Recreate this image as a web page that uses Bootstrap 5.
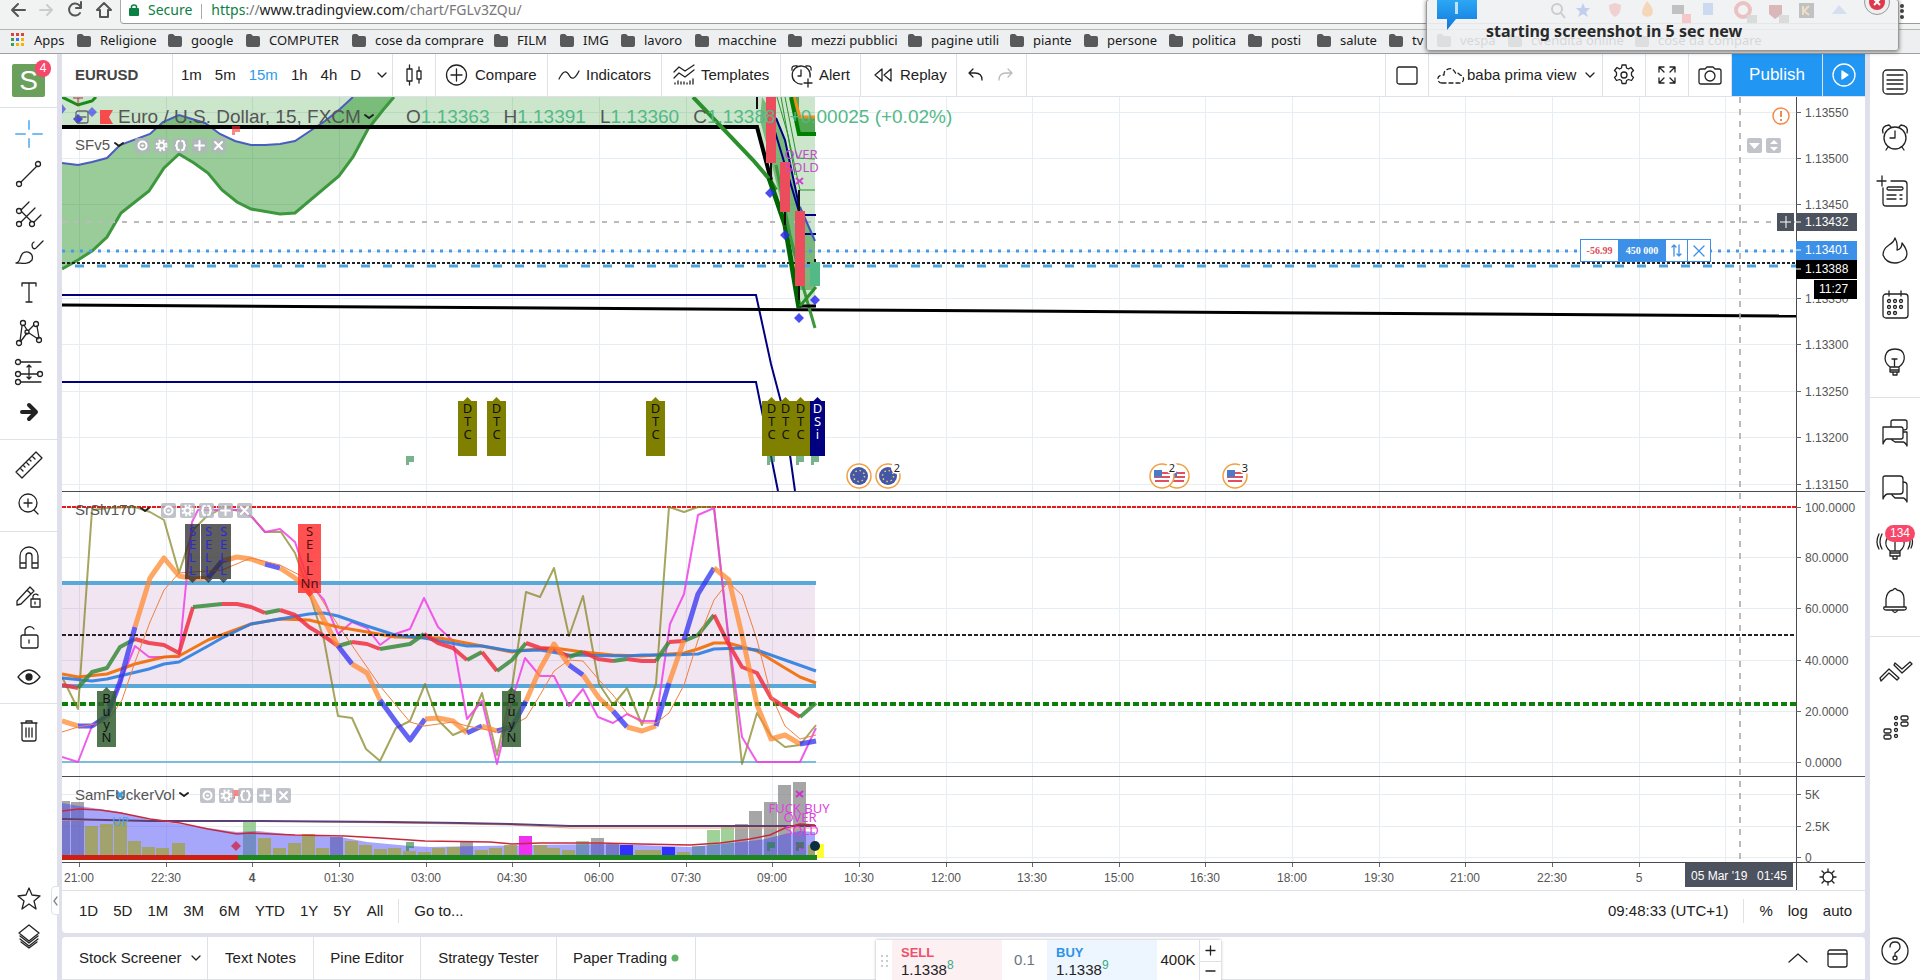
<!DOCTYPE html>
<html lang="en">
<head>
<meta charset="utf-8">
<title>EURUSD chart</title>
<meta name="viewport" content="width=device-width, initial-scale=1">
<link href="https://cdn.jsdelivr.net/npm/bootstrap@5.3.0/dist/css/bootstrap.min.css" rel="stylesheet">
<style>
:root{--gap:#e0e0ec;--line:#dfe1e8;--ink:#222}
body{font-family:"Liberation Sans",Arial,sans-serif;font-size:15px;line-height:20px;color:var(--ink);background:var(--gap)}
button,a.tool{background:none;border:0;padding:0;color:inherit;text-decoration:none}
svg{display:block;overflow:hidden}
.ico{fill:none;stroke:#222;stroke-width:1.3;stroke-linecap:round;stroke-linejoin:round;overflow:visible;flex:none}
.omni{height:29px;background:#f1f2f2}
.nav-icons{width:120px;padding-left:10px;gap:14px;height:20px}
.address{height:24px;margin-bottom:5px;gap:9px;border-left:1px solid #aaa;border-bottom:1px solid #9b9b9b;border-bottom-left-radius:4px;background:#fff;font:14px/19px "Noto Sans","Open Sans",sans-serif}
.address .sec{color:#0b8043}
.address .dim{color:#777}
.marks{height:25px;background:#edeff0;border-bottom:1px solid #a0a0a0;border-top:1px solid #b5b5b5;font:13px/20px "Noto Sans","Open Sans",sans-serif;color:#1a1a1a;padding:0 0 3px 11px}
.marks a{color:inherit;text-decoration:none;white-space:nowrap;flex:none}
.marks svg{margin-right:9px}
.toast-box{left:1426px;right:21px;top:-1px;height:52px;background:rgba(238,240,241,.88);border:1px solid #999;border-radius:3px;box-shadow:0 1px 4px rgba(0,0,0,.5);z-index:5}
.toast-box p{font:bold 16px/22px "Noto Sans","Open Sans",sans-serif;left:59px;top:20px;color:#2a2a2a}
.side-l{width:57px;margin-right:5px}
.side-r{width:50px;margin-left:5px}
.avatar{width:33px;height:33px;background:#6a9f5c;color:#fff;font-size:28px;line-height:33px;border-radius:2px}
.count{background:#f7486b;color:#fff;border-radius:10px;font-size:12px;line-height:17px}
.group{padding:6px 0 5px;border-bottom:1px solid var(--line)}
.side-l .tool{height:40px;width:57px}
.side-r .tool{height:56px;width:50px}
.side-r .group{padding:7px 0}
.side-r .group:first-child{padding-top:0}
.tool{display:flex;align-items:center;justify-content:center;flex:none}
.topbar{height:43px;border-bottom:1px solid var(--line)}
.cell{border-right:1px solid var(--line);display:flex;align-items:center;white-space:nowrap}
.c43{width:43px}
.blue{background:#2196f3;color:#fff}
.blue .ico{stroke:#fff}
.range{height:43px;border-top:1px solid var(--line);border-radius:0 0 4px 4px;margin-bottom:4px}
.vr-line{width:1px;height:24px;background:var(--line)}
.tabs{height:43px;border-bottom:1px solid var(--line);border-radius:4px 4px 0 0}
.tabs .cell{height:100%}
.trade{left:814px;top:3px;height:40px;width:345px;box-shadow:0 0 3px rgba(0,0,0,.3)}
.trade .leg{width:110px;padding:3px 9px 0;line-height:18px;text-align:left}
.trade sup{font-size:12px;color:#3aa981;top:-6px}
.legend{left:13px;color:#555;font-size:15px;line-height:16px;white-space:nowrap}
.legend-main{font-size:19px;line-height:20px}
.lb{width:15px;height:15px;background:rgba(178,180,190,.8);border-radius:2px;display:flex;align-items:center;justify-content:center}
.lb .ico{stroke:#fff;stroke-width:2}
.up{color:#53b987}
.ax{font-size:12px;fill:#555}
.tag{font:13px "Noto Sans",sans-serif}
.order{left:1518px;top:142px;height:23px;border:1px solid #3c90e8;background:#fff;font:bold 10px/21px "Liberation Serif",serif}
.order button,.order span{width:22px;border-right:1px solid #3c90e8;display:flex;align-items:center;justify-content:center}
.order .ico{stroke:#3c90e8}
</style>
</head>
<body>
<div class="vh-100 d-flex flex-column overflow-hidden position-relative">

<header>
  <div class="omni d-flex">
    <div class="nav-icons d-flex align-items-center">
      <button aria-label="Back"><svg class="ico" width="16" height="16" style="stroke:#555;stroke-width:2"><path d="M15 8H2M8 2L2 8l6 6"/></svg></button>
      <button aria-label="Forward"><svg class="ico" width="13" height="16" style="stroke:#ccc;stroke-width:2"><path d="M0 8h12M7 3l5 5-5 5"/></svg></button>
      <button aria-label="Reload"><svg class="ico" width="15" height="16" style="stroke:#555;stroke-width:2"><path d="M13 11a6 6 0 1 1-1-8l2 2M14 0v6H9"/></svg></button>
      <button aria-label="Home"><svg class="ico" width="16" height="16" style="stroke:#555;stroke-width:2"><path d="M1 8l7-7 7 7h-3v7H4V8z"/></svg></button>
    </div>
    <div class="address d-flex flex-grow-1 ps-2">
      <svg width="10" height="14" class="mt-1"><rect y="4" width="10" height="8" rx="1" fill="#0b8043"/><path d="M2.500 5V3a2.500 2 0 0 1 5 0v2" fill="none" stroke="#0b8043" stroke-width="1.500"/></svg>
      <span class="sec">Secure</span><span class="vr-line mt-1" style="height:15px;background:#aaa"></span>
      <span><span class="sec">https</span><span class="dim">://</span>www.tradingview.com<span class="dim">/chart/FGLv3ZQu/</span></span>
    </div>
  </div>
  <nav class="marks d-flex align-items-center" id="marks" aria-label="Bookmarks">
    <a href="#" class="d-flex align-items-center"><svg width="14" height="14"><g fill="#db4437"><path d="M0 0h3v3H0zM5 0h3v3H5zM10 0h3v3h-3z"/></g><path d="M0 5h3v3H0zM0 10h3v3H0z" fill="#3a9d5d"/><path d="M5 5h3v3H5z" fill="#3b78e7"/><path d="M10 5h3v3h-3zM5 10h3v3H5zM10 10h3v3h-3z" fill="#f4b400"/></svg>Apps</a>
  </nav>
</header>

<div class="toast-box position-absolute" role="status">
  <svg class="position-absolute" width="420" height="24" style="left:120px;top:1px;opacity:.3"><circle cx="10" cy="8" r="5" fill="none" stroke="#777" stroke-width="2"/><path d="M14 12l4 5" stroke="#777" stroke-width="2"/><path d="M36 2l2 5h5l-4 4 2 5-5-3-5 3 2-5-4-4h5z" fill="#5080e0"/><path d="M62 4l6-2 6 2q0 9-6 12-6-3-6-12z" fill="#e88"/><path d="M100 0q8 8 5 14-6 4-10-1 0-6 5-13z" fill="#f93"/><path d="M125 4h12v9h-12z" fill="#555"/><path d="M135 13h9v9h-9z" fill="#f66"/><path d="M156 2h10v12h-10z" fill="#7aa6ee"/><circle cx="196" cy="9" r="7" fill="none" stroke="#d55" stroke-width="4"/><path d="M222 4h13v9l-7 5-6-5z" fill="#a33"/><path d="M200 14h10v8h-10zM232 14h10v8h-10z" fill="#aaa"/><path d="M252 2h15v15h-15z" fill="#555"/><path d="M256 5v9M262 5l-5 5 5 4" stroke="#f5b060" stroke-width="2" fill="none"/><path d="M285 13l7-9 8 9z" fill="#9ab6ee"/></svg>
  <svg class="position-absolute" width="42" height="30" style="left:10px;top:0"><defs><linearGradient id="bl" x2="0" y2="1"><stop stop-color="#2ba7f3"/><stop offset="1" stop-color="#1277dd"/></linearGradient></defs><path d="M0 0h40v19H19L10 30V19H0z" fill="url(#bl)"/><path d="M18 2h3v12h-3z" fill="#bfe2fb"/></svg>
  <p class="position-absolute m-0 text-nowrap">starting screenshot in 5 sec new</p>
  <button class="position-absolute" aria-label="Close" style="right:7px;top:-12px"><svg width="28" height="28"><circle cx="14" cy="14" r="12.500" fill="#eee" stroke="#999"/><circle cx="14" cy="14" r="8" fill="#dc3a4c"/><path d="M11 11l6 6M17 11l-6 6" stroke="#fff" stroke-width="2"/></svg></button>
</div>
<svg class="position-absolute end-0 top-0" width="30" height="20" aria-hidden="true"><g fill="#444"><circle cx="12" cy="6" r="2"/><circle cx="12" cy="11" r="2"/><circle cx="12" cy="17" r="2"/></g></svg>

<div class="d-flex flex-grow-1" style="min-height:0">
<aside class="side-l bg-white d-flex flex-column flex-shrink-0">
  <div class="border-bottom position-relative" style="padding:10px 12px">
    <div class="avatar text-center">S</div>
    <span class="count position-absolute text-center" style="left:35px;top:6px;width:16px">4</span>
  </div>
  <div class="group">
    <button class="tool" aria-label="Cross"><svg class="ico" width="28" height="28" style="stroke:#74bdf5;stroke-width:2"><path d="M14 1v8M14 19v8M1 14h9M18 14h9"/></svg></button>
    <button class="tool" aria-label="Trend line"><svg class="ico" width="28" height="28"><path d="M6 22L22 6"/><circle cx="4" cy="24" r="2.500"/><circle cx="23" cy="4" r="2.500"/></svg></button>
    <button class="tool" aria-label="Pitchfork"><svg class="ico" width="28" height="28"><path d="M6 10l8-8M6 22L20 8M19 22l7-7M7 12l9 9"/><circle cx="4" cy="11" r="2.500"/><circle cx="4" cy="24" r="2.500"/><circle cx="17" cy="24" r="2.500"/></svg></button>
    <button class="tool" aria-label="Brush"><svg class="ico" width="28" height="28"><path d="M1 23c5-1 3-6 7-10 5-3 11 1 9 7-4 5-10 3-16 3zM17 5c0 4 3 5 5 2l6-6M17 5q0-2 2-3"/></svg></button>
    <button class="tool" aria-label="Text"><svg class="ico" width="28" height="28"><path d="M7 6V3h14v3M14 3v19M11 22h6"/></svg></button>
    <button class="tool" aria-label="Pattern"><svg class="ico" width="28" height="28"><path d="M5 21L7 6M9 5l3 5M14 10l5-5M22 6l2 12M6 21l6-8M14 13l9 6"/><circle cx="4" cy="23" r="2.500"/><circle cx="8" cy="3" r="2.500"/><circle cx="21" cy="4" r="2.500"/><circle cx="24" cy="20" r="2.500"/><circle cx="12" cy="12" r="2"/></svg></button>
    <button class="tool" aria-label="Position"><svg class="ico" width="28" height="28"><path d="M6 2h20M6 14h17M6 22h20M14 5v13M12 7l2-2 2 2M12 17l2 2 2-2"/><circle cx="3" cy="2" r="2.500"/><circle cx="3" cy="14" r="2.500"/><circle cx="25" cy="14" r="2.500"/><circle cx="3" cy="22" r="2.500"/></svg></button>
    <button class="tool" aria-label="Arrow"><svg class="ico" width="28" height="28" style="stroke-width:4"><path d="M7 12h13M14 5l7 7-7 7" /></svg></button>
  </div>
  <div class="group">
    <button class="tool" aria-label="Measure"><svg class="ico" width="28" height="28"><path d="M1 20L21 0l6 6L7 26zM5 16l3 3M8 13l2 2M11 10l3 3M14 7l2 2M17 4l3 3"/></svg></button>
    <button class="tool" aria-label="Zoom in"><svg class="ico" width="28" height="28"><circle cx="13" cy="11" r="9"/><path d="M9 11h8M13 7v8M19 18l4 4"/></svg></button>
  </div>
  <div class="group">
    <button class="tool" aria-label="Magnet"><svg class="ico" width="28" height="28"><path d="M5 24V12a9 9 0 0 1 18 0v12h-6V12a3 3 0 0 0-6 0v12zM5 19h6M17 19h6"/></svg></button>
    <button class="tool" aria-label="Lock drawing"><svg class="ico" width="28" height="28"><path d="M2 17L15 3l4 4L6 20l-4 1zM12 6l4 4M16 15h9v8h-9zM18 15v-3a3 3 0 0 1 5-1M20 18v2"/></svg></button>
    <button class="tool" aria-label="Lock"><svg class="ico" width="28" height="28"><rect x="6" y="11" width="17" height="13" rx="2"/><path d="M10 11V6a5 5 0 0 1 9-1M14 16v3"/></svg></button>
    <button class="tool" aria-label="Hide"><svg class="ico" width="28" height="28"><path d="M3 13q11-14 22 0-11 14-22 0z"/><circle cx="14" cy="13" r="3" fill="#222"/></svg></button>
  </div>
  <div class="pt-2">
    <button class="tool" aria-label="Delete"><svg class="ico" width="28" height="28"><path d="M7 5h14v16q0 2-2 2H9q-2 0-2-2zM6 5h16M11 5V3h6v2M11 10v9M14 10v9M17 10v9"/></svg></button>
  </div>
  <div class="mt-auto" style="margin-bottom:22px">
    <button class="tool" aria-label="Favorites"><svg class="ico" width="28" height="28"><path d="M14 4l3 7 8 1-6 5 2 8-7-5-7 5 2-8-6-5 8-1z"/></svg></button>
    <button class="tool" aria-label="Objects"><svg class="ico" width="28" height="28"><path d="M14 1l10 8-10 8-10-8zM5 12l9 7 9-7M5 15l9 7 9-7M6 18l8 6 8-6"/></svg></button>
  </div>
</aside>

<main class="flex-grow-1 d-flex flex-column" style="min-width:0">
  <div class="topbar bg-white d-flex">
    <button class="cell fw-bold" style="width:111px;color:#444;padding-left:13px">EURUSD</button>
    <div class="cell" style="width:220px;padding-left:8px;gap:13px">
      <button>1m</button><button>5m</button><button style="color:#2f9be8">15m</button><button>1h</button><button>4h</button><button>D</button>
      <button class="ms-1" aria-label="More"><svg class="ico" width="8" height="5"><path d="M0 0l4 4 4-4"/></svg></button></div>
    <button class="cell c43 justify-content-center" aria-label="Candles"><svg class="ico" width="16" height="22"><path d="M1 5h5v12H1zM3.500 1v4M3.500 17v4M11 7h4v8h-4zM13 3v4M13 15v4"/></svg></button>
    <button class="cell gap-2" style="width:112px;padding-left:10px"><svg class="ico" width="21" height="22"><circle cx="10.500" cy="11" r="10"/><path d="M5 11h11M10.500 5v12"/></svg>Compare</button>
    <button class="cell" style="width:114px;padding-left:11px;gap:7px"><svg class="ico" width="20" height="12"><path d="M0 10q6-12 10-4t10-4"/></svg>Indicators</button>
    <button class="cell" style="width:119px;padding-left:11px;gap:6px"><svg class="ico" width="22" height="20"><path d="M1 7l5-5 6 4 9-6M1 13l5-5 6 4 9-7M2 19v-1M5 19v-3M8 19v-2M11 19v-2M14 19v-1M17 19v-3M20 19v-5"/></svg>Templates</button>
    <button class="cell" style="width:80px;padding-left:10px;gap:6px"><svg class="ico" width="22" height="22"><path d="M11 20a9 9 0 1 1 8-7M10 6v6H7M17 15v8M13 19h8M1 6q-1-5 5-4M20 6q1-5-5-4"/></svg>Alert</button>
    <button class="cell" style="width:96px;padding-left:13px;gap:8px"><svg class="ico" width="18" height="14"><path d="M8 1v12L1 7zM17 1v12l-7-6z"/></svg>Replay</button>
    <div class="cell" style="width:70px;padding-left:11px;gap:15px"><button aria-label="Undo"><svg class="ico" width="15" height="12"><path d="M5 0L1 4l4 4M1 4h6q7 0 7 7"/></svg></button><button aria-label="Redo"><svg class="ico" width="15" height="12" style="stroke:#bbb"><path d="M10 0l4 4-4 4M14 4H8q-7 0-7 7"/></svg></button></div>
    <div class="cell flex-grow-1"></div>
    <button class="cell c43 justify-content-center" aria-label="Layout"><svg class="ico" width="22" height="19"><rect x="1" y="1" width="20" height="17" rx="2"/></svg></button>
    <button class="cell" style="width:174px;padding-left:8px;gap:4px"><svg class="ico" width="26" height="17" stroke-dasharray="4 3"><path d="M5 16H22a4 4 0 0 0 1-8Q21 5 19 7 15-2 8 4 7 5 7 8 0 8 1 13q1 3 4 3"/></svg>baba prima view<svg class="ico ms-auto me-2" width="8" height="5"><path d="M0 0l4 4 4-4"/></svg></button>
    <button class="cell c43 justify-content-center" aria-label="Settings"><svg class="ico" width="22" height="22" viewBox="0 0 22 22"><path d="M9 1h4l.5 3 2 1 2.500-1.500 2.500 3-2 2v3l2 2-2 3-3-1-2 1-.5 3H9l-.500-3-2-1-3 1-2-3 2-2v-3l-2-2 2.500-3L6.500 5l2-1z"/><circle cx="11" cy="11" r="3"/></svg></button>
    <button class="cell c43 justify-content-center" aria-label="Fullscreen"><svg class="ico" width="18" height="18"><path d="M1 6V1h5M1 1l5 5M12 1h5v5M17 1l-5 5M1 12v5h5M1 17l5-5M12 17h5v-5M17 17l-5-5"/></svg></button>
    <button class="cell c43 justify-content-center" aria-label="Snapshot"><svg class="ico" width="24" height="19"><path d="M3 3h4l2-2h6l2 2h4q2 0 2 2v11q0 2-2 2H3q-2 0-2-2V5q0-2 2-2z"/><circle cx="12" cy="10" r="5"/></svg></button>
    <button class="cell blue justify-content-center" style="width:91px;font-size:17px">Publish</button>
    <button class="blue d-flex align-items-center justify-content-center" style="width:42px" aria-label="Play"><svg class="ico" width="24" height="24"><circle cx="12" cy="12" r="11"/><path d="M10 8l6 4-6 4z" fill="#fff"/></svg></button>
  </div>

  <div class="flex-grow-1 position-relative bg-white overflow-hidden" style="min-height:0">
    <svg id="chart" class="w-100 h-100" viewBox="62 97 1803 793" preserveAspectRatio="xMinYMin slice" role="img" aria-label="EURUSD price and indicators">
      <g id="grid" stroke="#e6eef3"></g>
      <!-- price pane -->
      <path d="M62 97H815V308H799L785 222 757 127H62z" fill="#008000" fill-opacity=".2"/>
      <path d="M762 97L776 118 785 140 800 207 815 240V290H800L790 240 772 165 760 120z" fill="#007000" fill-opacity=".4"/>
      <path d="M62 269L78 260 92 251 107 237 121 213 149 191 164 168 179 154 194 163 208 173 222 190 237 202 251 209 280 214 295 213 339 176 353 157 368 129 383 110 394 97H353L340 109 325 121 310 131 295 141 280 144 265 145 251 145 235 141 220 134 205 123 192 119 179 115 163 122 150 134 120 145 107 158 92 162 78 165 62 163z" fill="#008000" fill-opacity=".4"/>
      <g fill="none">
        <path d="M62 163L78 165 92 162 107 158 120 145 150 134 163 122 179 115 192 119 205 123 220 134 235 141 251 145 265 145 280 144 295 141 310 131 325 121 340 109 353 97" stroke="#4a5cc0" stroke-width="2"/>
        <path d="M62 269L78 260 92 251 107 237 121 213 149 191 164 168 179 154 194 163 208 173 222 190 237 202 251 209 280 214 295 213 339 176 353 157 368 129 383 110 394 97" stroke="#3d973d" stroke-width="3"/>
        <path d="M62 97L78 105 92 101 96 97" stroke="#1a8a1a" stroke-width="3"/>
        <path d="M73 98h10M78 98v8" stroke="#a33"/>
        <path d="M62 222H1796" stroke="#bbb" stroke-width="2" stroke-dasharray="5 7"/>
        <path d="M62 251H1796" stroke="#4a98e8" stroke-width="3" stroke-dasharray="3 6"/>
        <path d="M75 266H1796" stroke="#4ea6dc" stroke-width="3" stroke-dasharray="9 13"/>
        <path d="M62 263H1796" stroke="#222" stroke-width="2" stroke-dasharray="3 2"/>
        <g stroke="#000080" stroke-width="2"><path d="M62 295H756L771 364 781 402M790 455L795 491M62 382H756L771 456 778 491"/><path d="M776 118L785 140 800 210M773 125L800 215M804 215h12M804 234h12"/></g>
        <path d="M62 305L1796 316" stroke="#000" stroke-width="3"/>
        <path d="M62 127H757L771 180" stroke="#000" stroke-width="4"/>
        <path d="M693 97L753 160 770 180 776 190" stroke="#2b902b" stroke-width="4"/>
        <path d="M769 178L785 225 799 308" stroke="#006400" stroke-width="5"/>
        <path d="M776 165L790 235 804 290 815 328" stroke="#3d973d" stroke-width="3"/>
        <path d="M800 207L815 241" stroke="#3a55c0" stroke-width="2"/>
        <path d="M777 97L788 135 800 190H815M785 97L797 158 815 159M781 97L795 175" stroke="#2b902b"/>
        <path d="M757 97v12M771 160v20M785 210v15M799 190v110M815 259v20" stroke="#111" stroke-width="2"/>
        <path d="M799 97V117H815V134H799L792 97z" fill="#008000" fill-opacity=".6"/>
        <path d="M794 97L800 117H815" stroke="#f28c1e" stroke-width="3"/><path d="M791 97L799 134H816" stroke="#008000" stroke-width="4"/>
        <path d="M800 306H816" stroke="#000" stroke-width="3"/><path d="M800 306L816 287" stroke="#2b902b" stroke-width="3"/>
      </g>
      <g fill="#eb4d5c"><path d="M766 97h10v66h-10zM780 162h10v50h-10zM795 211h10v75h-10z"/></g><path d="M810 262h10v24h-10z" fill="#53b987"/>
      <g fill="#2b2bf0" fill-opacity=".85"><path d="M770 188l5 5-5 5-5-5zM785 230l5 5-5 5-5-5zM799 313l5 5-5 5-5-5zM815 295l5 5-5 5-5-5zM78 114l5 5-5 5-5-5z"/><path d="M92 107l5 5-5 5-5-5zM62 104l4 5-4 5z" fill-opacity=".6"/></g>
      <g class="tag" fill="#c04cc8" text-anchor="middle"><text x="801" y="159">OVER</text><text x="802" y="172">SOLD</text></g>
      <path d="M796 178l7 6M803 178l-7 6" stroke="#d040d0" stroke-width="2"/>
      <!-- oscillator pane -->
      <path d="M62 583H815V686H62z" fill="#800080" fill-opacity=".1"/>
      <g fill="none">
        <path d="M62 583H816M62 686H816" stroke="#58a9da" stroke-width="4"/>
        <path d="M62 762H816" stroke="#7cbcdc" stroke-width="2"/>
        <path d="M62 507H1796" stroke="#e81818" stroke-width="2" stroke-dasharray="4 1"/>
        <path d="M62 704H1796" stroke="#0a800a" stroke-width="4" stroke-dasharray="6 3"/>
      </g>
      <g id="series" fill="none" stroke-linejoin="round"></g>
      <path d="M62 635H1796" stroke="#222" stroke-width="2" stroke-dasharray="4 2"/>
      <!-- volume pane -->
      <g id="bars"></g>
      <path d="M62 803L79 806 120 812 150 820 180 824 208 828 237 832 258 831 295 835 340 837 367 842 410 846 430 847 480 846 530 845 600 844 640 845 690 847 720 844 750 841 765 839 785 834 800 831 815 832V857H62z" fill="#4646f5" fill-opacity=".48"/>
      <g id="barsTop"></g>
      <g fill="none" stroke-width="2"><path d="M62 820L150 821 260 821 390 823 460 824 510 825 570 828 816 828" stroke="#f0a070" stroke-width="1"/><path d="M62 819L150 821 260 821 390 822 460 823 510 824 570 826 816 826" stroke="#5a3f78"/><path d="M62 811L79 809 100 810 121 813 150 819 180 823 208 829 237 834 250 833 295 835 345 836 380 838 425 841 490 842 512 844 540 843 600 843 640 844 690 845 720 843 750 839 770 835 785 828 800 824 815 825" stroke="#c8283c" stroke-width="1.500"/></g>
      <path d="M62 855h176v5H62z" fill="#cc2010"/><path d="M238 855h579v5H238z" fill="#1e861e"/>
      <path d="M817 844h7v14h-7z" fill="#ff3"/><circle cx="815" cy="846" r="5" fill="#0a3040"/>
      <path d="M236 841l5 5-5 5-5-5z" fill="#c8406e"/><path d="M796 843l7 6M803 843l-7 6M796 791l7 6M803 791l-7 6" stroke="#d030d0" stroke-width="2"/>
      <path d="M117 792l6 6M123 792l-6 6" stroke="#3a9fe0" stroke-width="3"/>
      <g class="tag"><text x="112" y="826" fill="#4ea6dc">UP</text><g fill="#e040e0" text-anchor="middle"><text x="799" y="813">FUCK BUY</text><text x="800" y="822">OVER</text><text x="802" y="835">SOLD</text></g></g>
      <g id="tags"></g>
      <g id="events"></g>
      <!-- scales -->
      <path d="M1740 97V866" stroke="#aaa" stroke-width="2" stroke-dasharray="6 6" stroke-opacity=".8" fill="none"/>
      <path d="M62 491.500H1865M62 776.500H1865M62 862.500H1865M1796.500 97V890" stroke="#4a4a50" fill="none"/>
      <g id="axis" class="ax"></g>
      <g font-size="12" fill="#fff"><path d="M1777 213h17v18h-17zM1796 213h61v18h-61z" fill="#4c525e"/><path d="M1780 222h11M1786 216v12" stroke="#fff"/><text x="1805" y="226">1.13432</text>
      <path d="M1796 241h61v19h-61z" fill="#3c90e8"/><text x="1805" y="254">1.13401</text><path d="M1796 260h61v19h-61zM1814 280h43v19h-43z" fill="#000"/><text x="1805" y="273">1.13388</text><text x="1819" y="293">11:27</text>
      <path d="M1796 222h5M1796 250h5M1796 269h5" stroke="#fff"/>
      <path d="M1685 863h108v24h-108z" fill="#4c525e"/><text x="1691" y="880">05 Mar '19</text><text x="1757" y="880">01:45</text></g>
      <g class="ico"><circle cx="1828" cy="877" r="5"/><path d="M1828 869v3M1828 882v3M1820 877h3M1833 877h3M1822 871l2 2M1834 871l-2 2M1822 883l2-2M1834 883l-2-2"/></g>
      <circle cx="1781" cy="116" r="8" fill="#fff" stroke="#f5894a" stroke-width="1.500"/><path d="M1781 111v6M1781 119v2" stroke="#f5894a" stroke-width="2"/>
    </svg>

    <div class="legend legend-main position-absolute d-flex align-items-center" style="top:10px">
      <svg class="ico" width="15" height="14" style="stroke:#666"><rect x="1" y="1" width="12" height="12" rx="2"/><path d="M4 7h7"/></svg>
      <svg width="13" height="14" style="margin:0 5px 0 10px"><path d="M0 0h13l-4 7 4 7H0z" fill="#f74b4b"/></svg>
      <span>Euro / U.S. Dollar, 15, FXCM</span><svg class="ico ms-1" width="8" height="5" style="stroke-width:2"><path d="M0 0l4 3 4-3"/></svg>
    </div>
    <div class="legend legend-main position-absolute d-flex" style="top:10px;left:344px;gap:14px"><span>O<span class="up">1.13363</span></span><span>H<span class="up">1.13391</span></span><span>L<span class="up">1.13360</span></span><span>C<span class="up">1.13388</span></span><span class="up">+0.00025 (+0.02%)</span></div>
    <div class="legend position-absolute d-flex align-items-center" style="top:40px" data-name="SFv5"></div>
    <div class="legend position-absolute d-flex align-items-center" style="top:405px" data-name="SrSlv170"></div>
    <div class="legend position-absolute d-flex align-items-center" style="top:690px" data-name="SamFUckerVol"></div>
    <div class="position-absolute d-flex" style="top:41px;gap:4px;right:84px">
      <button class="lb" aria-label="Down"><svg width="11" height="6"><path d="M0 0h11l-5.500 6z" fill="#fff"/></svg></button><button class="lb" aria-label="Resize"><svg width="8" height="11"><path d="M0 4h8L4 0zM0 7h8l-4 4z" fill="#fff"/></svg></button></div>
    <div class="order position-absolute d-flex">
      <span style="width:38px;color:#e04b55">-56.99</span><span style="width:47px;background:#3c90e8;color:#fff">450 000</span>
      <button aria-label="Reverse"><svg class="ico" width="11" height="13"><path d="M3 12V1M1 3l2-2 2 2M8 1v11M6 10l2 2 2-2"/></svg></button><button aria-label="Close position" class="border-end-0"><svg class="ico" width="10" height="10"><path d="M0 0l10 10M10 0L0 10"/></svg></button></div>
  </div>

  <div class="range bg-white d-flex align-items-center position-relative" style="padding:0 13px 2px 17px;gap:15px">
    <button class="position-absolute bg-white border" aria-label="Collapse" style="left:-11px;top:-5px;width:9px;height:29px;border-radius:4px 0 0 4px!important"><svg class="ico" width="5" height="8" style="stroke:#888"><path d="M5 0L2 4l3 4"/></svg></button>
    <button>1D</button><button>5D</button><button>1M</button><button>3M</button><button>6M</button><button>YTD</button><button>1Y</button><button>5Y</button><button>All</button>
    <span class="vr-line"></span><button>Go to...</button>
    <button class="ms-auto">09:48:33 (UTC+1)</button><span class="vr-line"></span><button>%</button><button>log</button><button>auto</button>
  </div>

  <div class="tabs bg-white d-flex align-items-center position-relative">
    <button class="cell justify-content-between" style="width:146px;padding:0 7px 0 17px">Stock Screener<svg class="ico" width="8" height="5"><path d="M0 0l4 4 4-4"/></svg></button>
    <button class="cell justify-content-center" style="width:106px">Text Notes</button>
    <button class="cell justify-content-center" style="width:107px">Pine Editor</button>
    <button class="cell justify-content-center" style="width:136px">Strategy Tester</button>
    <button class="cell justify-content-center gap-1" style="width:139px">Paper Trading<svg width="8" height="8"><circle cx="4" cy="4" r="3.500" fill="#5fb563"/></svg></button>
    <div class="ms-auto d-flex align-items-center" style="gap:20px;padding-right:17px">
      <button aria-label="Expand"><svg class="ico" width="19" height="10"><path d="M1 9l9-8 9 8"/></svg></button><button aria-label="Maximize"><svg class="ico" width="21" height="19"><rect x="1" y="1" width="19" height="17" rx="2"/><path d="M1 5h19"/></svg></button></div>
    <div class="trade bg-white position-absolute d-flex">
      <svg width="16" height="40" class="flex-shrink-0"><g fill="#ccc"><path d="M5 15h2v2H5zM5 20h2v2H5zM5 25h2v2H5zM10 15h2v2h-2zM10 20h2v2h-2zM10 25h2v2h-2z"/></g></svg>
      <button class="leg" style="background:#fdf0f3"><b class="fw-bold d-block" style="color:#f04f6c;font-size:13px;line-height:16px">SELL</b>1.1338<sup>8</sup></button>
      <span class="d-flex align-items-center justify-content-center text-secondary" style="width:45px">0.1</span>
      <button class="leg" style="background:#edf6fe"><b class="fw-bold d-block" style="color:#2d93e8;font-size:13px;line-height:16px">BUY</b>1.1338<sup>9</sup></button>
      <span class="d-flex align-items-center justify-content-center border-end" style="width:43px">400K</span>
      <span class="d-flex flex-column" style="width:21px"><button class="border-bottom w-100" aria-label="More" style="height:22px"><svg class="ico m-auto" width="9" height="9"><path d="M0 4.500h9M4.500 0v9"/></svg></button><button class="w-100" aria-label="Less" style="height:18px"><svg class="ico m-auto" width="9" height="2"><path d="M0 1h9"/></svg></button></span>
    </div>
  </div>
</main>

<aside class="side-r bg-white d-flex flex-column flex-shrink-0">
  <div class="group">
    <button class="tool" aria-label="Watchlist"><svg class="ico" width="28" height="28"><rect x="2" y="2" width="24" height="24" rx="4"/><path d="M6 7h16M6 12h16M6 16h16M6 21h16"/></svg></button>
    <button class="tool" aria-label="Alerts"><svg class="ico" width="28" height="28"><circle cx="14" cy="14" r="11"/><path d="M14 7v7H9M2 9Q0 2 8 1l2 2M26 9q2-7-6-8l-2 2M7 23l-2 3M21 23l2 3"/></svg></button>
    <button class="tool" aria-label="Data window"><svg class="ico" width="28" height="28"><path d="M10 1h13q3 0 3 3v19q0 3-3 3H5q-3 0-3-3V8M1-4v10M-4 1h9"/><rect x="6" y="7" width="16" height="3" rx="1.500"/><path d="M6 15h9M19 15h2M6 19h9M19 19h2"/></svg></button>
    <button class="tool" aria-label="Hotlist"><svg class="ico" width="28" height="28"><path d="M14 2q3 5 2 12 5-1 5-7 8 10 3 16-5 4-10 4-9 0-12-8Q2 13 8 9 13 6 14 2z"/></svg></button>
    <button class="tool" aria-label="Calendar"><svg class="ico" width="28" height="28"><rect x="2" y="2" width="25" height="24" rx="3"/><path d="M8-1v5M20-1v5"/><g><circle cx="8" cy="9" r="1.500"/><circle cx="14" cy="9" r="1.500"/><circle cx="20" cy="9" r="1.500"/><circle cx="8" cy="15" r="1.500"/><circle cx="14" cy="15" r="1.500"/><circle cx="20" cy="15" r="1.500"/><circle cx="8" cy="21" r="1.500"/><circle cx="14" cy="21" r="1.500"/></g></svg></button>
    <button class="tool" aria-label="Ideas"><svg class="ico" width="28" height="28"><path d="M9 19C1 13 3 1 14 1s12 12 4 18zM9 19v5h9v-5M9 22h9M12 24v3h4v-3M11 11h5M13.500 11v8"/></svg></button>
  </div>
  <div class="group">
    <button class="tool" aria-label="Public chats"><svg class="ico" width="28" height="28"><path d="M2 8h18q2 0 2 2v8q0 2-2 2H6q-2 0-4 5zM10 8V3q0-2 2-2h12q2 0 2 2v6q0 2-4 2M22 13h4v14q-2-4-4-4h-8l-3-2"/></svg></button>
    <button class="tool" aria-label="Private chats"><svg class="ico" width="28" height="28"><path d="M4 1h15q3 0 3 3v12q0 3-3 3H7q-3 0-5 5V3q0-2 2-2zM22 7q4 0 4 3v17q-2-4-4-4h-8l-3-3"/></svg></button>
    <button class="tool position-relative" aria-label="Ideas stream"><svg class="ico" width="28" height="28"><path d="M9 20C2 14 4 4 14 4s12 10 5 16zM9 20v5h10v-5M9 22h10M12 25v3h4v-3M14 10v10M1 3q-4 8 0 15M-2 3q-4 8 0 15M27 3q4 8 0 15M30 5q3 6 0 12"/></svg><span class="count position-absolute" style="left:15px;top:8px;padding:0 5px;border-radius:9px">134</span></button>
    <button class="tool" aria-label="Notifications"><svg class="ico" width="28" height="28"><path d="M5 20V12q1-8 7-9 2-3 4 0 7 1 7 9v8M3 20h22q1 3-2 3H5q-3 0-2-3zM11 23q3 5 6 0"/></svg></button>
  </div>
  <div style="padding-top:7px">
    <button class="tool" aria-label="Order panel"><svg class="ico" width="28" height="28"><path d="M-1 20l9-9 10 9-2 2-8-7-8 8zM13 7l8 8 10-9-2-2-8 7-7-6z"/></svg></button>
    <button class="tool" aria-label="Depth"><svg class="ico" width="28" height="28"><g><circle cx="15" cy="4" r="1.500"/><circle cx="15" cy="10" r="1.500"/><circle cx="15" cy="16" r="1.500"/><circle cx="15" cy="22" r="1.500"/><rect x="20" y="2" width="7" height="4" rx="1.500"/><rect x="20" y="8" width="7" height="4" rx="1.500"/><rect x="3" y="15" width="7" height="4" rx="1.500"/><rect x="3" y="21" width="7" height="4" rx="1.500"/></g></svg></button>
  </div>
  <button class="tool mt-auto" aria-label="Help"><svg class="ico" width="28" height="28"><circle cx="14" cy="13" r="13"/><path d="M9 9q0-5 5-5t5 5q0 3-5 6v2"/><circle cx="14" cy="20" r="2"/></svg></button>
</aside>
</div>
</div>

<script>
const $ = id => document.getElementById(id);
// bookmarks: label and the room each one takes
[['Religione',91],['google',78],['COMPUTER',106],['cose da comprare',142],['FILM',66],['IMG',61],['lavoro',74],['macchine',93],['mezzi pubblici',120],['pagine utili',102],['piante',74],['persone',85],['politica',79],['posti',69],['salute',72],['tv',48],['vespa',71],['cvendita online',127],['cose da compare',140]].forEach(([t,w])=>{
  $('marks').insertAdjacentHTML('beforeend',`<a href="#" class="d-flex align-items-center" style="width:${w}px"><svg width="14" height="13"><path d="M0 2q0-2 2-2h3l2 2h5q2 0 2 2v7q0 2-2 2H2q-2 0-2-2z" fill="#58595b"/></svg>${t}</a>`);
});
$('marks').firstElementChild.style.width='66px';

// indicator legends
const glyphs=['<circle cx="5.500" cy="5.500" r="4"/><path d="M5 5.500h1"/>','<circle cx="5.500" cy="5.500" r="3"/><circle cx="5.500" cy="5.500" r="5" stroke-width="2" stroke-dasharray="2 2" stroke-linecap="butt"/>','<path d="M4 1Q2 1 2 3T1 5.500Q2 6 2 8t2 2M7 1q2 0 2 2t1 2.500Q9 6 9 8t-2 2"/>','<path d="M1 5.500h9M5.500 1v9"/>','<path d="M2 2l7 7M9 2L2 9"/>'];
const names=['Hide','Format','Source','Add','Remove'];
document.querySelectorAll('[data-name]').forEach(el=>{
  el.innerHTML=`<span>${el.dataset.name}</span><svg class="ico" width="8" height="5" style="margin:0 12px 0 5px;stroke-width:2"><path d="M0 0l4 3 4-3"/></svg><span class="d-flex gap-1">${glyphs.map((g,i)=>`<button class="lb" aria-label="${names[i]}"><svg class="ico" width="11" height="11">${g}</svg></button>`).join('')}</span>`;
});

// grid and scales
const prices=[[112,'1.13550'],[158,'1.13500'],[204,'1.13450'],[251,''],[298,'1.13350'],[344,'1.13300'],[391,'1.13250'],[437,'1.13200'],[484,'1.13150'],[507,'100.0000'],[557,'80.0000'],[608,'60.0000'],[660,'40.0000'],[711,'20.0000'],[762,'0.0000'],[794,'5K'],[826,'2.5K'],[857,'0']];
const times=['21:00','22:30','4','01:30','03:00','04:30','06:00','07:30','09:00','10:30','12:00','13:30','15:00','16:30','18:00','19:30','21:00','22:30','5',''];
let g='',a='';
prices.forEach(([y,t])=>{g+=`<path d="M62 ${y}.5H1796"/>`;if(t)a+=`<path d="M1796 ${y}.5h5" stroke="#666"/><text x="1805" y="${y+5}">${t}</text>`});
times.forEach((t,i)=>{const x=Math.round(79+i*86.65);g+=`<path d="M${x}.5 97V862"/>`;if(t)a+=`<path d="M${x}.5 863v4" stroke="#666"/><text x="${x}" y="882" text-anchor="middle"${t==='4'?' font-weight="bold"':''}>${t}</text>`});
$('grid').innerHTML=g;$('axis').innerHTML=a;

// oscillator lines; alternates recolour the listed point ranges
const P=s=>s.split(' ').map(p=>p.split(',').map(Number));
const line=(pts,c,w,o=1)=>`<polyline points="${pts.join(' ')}" stroke="${c}" stroke-width="${w}" stroke-opacity="${o}"/>`;
const split=(pts,alt,c1,c2,w,o)=>{let s='';for(let i=0;i<pts.length-1;){const k=alt.has(pts[i][0]);let j=i+1;while(j<pts.length-1&&alt.has(pts[j][0])===k)j++;s+=line(pts.slice(i,j+1),k?c2:c1,w,o);i=j}return s};
const olive=P('62,677 78,709 92,510 107,508 135,507 150,512 164,520 179,573 193,530 205,518 222,508 240,511 251,516 265,532 281,532 295,553 309,592 324,640 338,716 352,718 366,749 380,761 396,728 410,721 425,684 438,720 453,735 467,729 482,693 497,755 512,687 526,592 540,597 554,568 569,636 583,596 599,684 613,705 627,688 642,725 656,684 669,507 684,512 698,507 714,507 728,635 742,764 757,713 771,736 785,747 800,745 816,725');
const pink=P('62,757 78,762 92,726 107,715 135,646 149,657 179,657 192,522 198,510 240,510 253,518 265,532 280,529 295,542 309,583 324,600 338,634 352,622 367,628 380,645 395,634 410,629 424,598 438,627 453,641 467,719 482,701 497,764 512,700 525,658 540,676 554,676 569,706 583,689 598,717 613,723 627,714 642,721 656,721 670,624 684,594 698,515 714,508 728,632 742,737 757,762 800,762 816,728');
const fast=P('62,721 78,726 92,726 107,716 120,682 135,627 150,578 164,558 179,576 194,579 208,578 222,561 237,557 251,559 265,564 280,568 295,578 309,592 324,620 338,646 352,664 367,673 380,700 396,722 410,740 425,719 438,718 453,721 467,733 482,726 497,731 512,727 526,701 540,669 554,644 569,665 583,675 599,698 613,711 627,727 642,731 656,726 669,683 684,640 698,594 714,568 729,580 742,635 757,705 771,739 785,735 800,744 816,741');
const thin=P('62,732 78,727 107,722 122,700 135,662 150,622 164,590 179,573 222,570 251,558 280,565 309,580 338,625 380,686 410,722 424,726 453,722 467,726 497,732 512,725 526,718 540,695 554,671 569,660 583,661 599,680 613,695 627,713 642,723 656,723 669,713 684,685 698,640 714,600 728,582 742,595 757,640 771,695 785,726 800,739 816,735');
const main=P('62,685 78,688 92,672 107,668 120,647 135,639 149,643 164,645 179,653 193,607 222,604 237,604 251,607 265,613 280,610 295,615 309,627 324,636 338,646 352,642 367,644 380,649 410,644 424,634 438,643 453,648 467,660 482,652 497,671 512,660 526,643 540,648 554,649 569,657 583,652 598,659 613,661 627,659 642,661 656,661 669,642 684,641 698,635 714,615 728,643 742,667 757,673 771,698 785,707 800,717 816,703');
const slow=P('62,674 78,677 107,674 135,664 164,657 179,656 208,640 251,624 280,619 309,620 338,627 367,632 395,637 440,638 482,646 512,652 526,650 554,648 583,652 613,655 642,656 684,653 698,649 714,643 728,643 757,651 785,668 800,677 816,683');
const slow2=P('62,678 92,681 107,679 149,669 164,664 179,662 208,646 222,638 251,624 280,619 309,614 324,613 338,616 367,626 395,635 424,638 467,646 482,646 512,651 540,650 569,655 627,656 642,655 669,655 698,654 714,649 742,648 757,650 785,660 816,671');
$('series').innerHTML=line(olive,'#80801a',2,.7)+line(pink,'#f040e8',2,.85)+line(slow,'#ef6c00',3,.9)+line(slow2,'#2b7de0',3,.9)
 +split(main,new Set([78,92,107,120,193,265,338,380,410,467,497,512,569,613,656,684,698,800]),'#f03040','#3a8a3a',4,.85)
 +split(fast,new Set([78,92,107,120,208,265,338,380,396,410,467,497,512,569,613,656,684,698,800]),'#ff8a30','#3030f0',5,.75)
 +line(thin,'#f08040',1);

// volume bars: left, top, colour key
const col={o:'rgba(160,160,60,.75)',g:'rgba(128,128,128,.7)',n:'rgba(120,190,110,.7)',m:'#f030f0',b:'#3030ff'};
const vol='62,801,g 71,802,g 85,826,o 100,824,o 114,822,o 128,841,o 142,847,o 156,848,o 172,843,o 243,822,n 258,838,o 273,848,o 288,843,o 302,834,o 316,848,o 330,837,g 345,841,o 359,845,o 374,849,o 388,848,o 403,851,o 418,852,o 432,848,o 447,847,o 460,841,g 475,850,o 489,848,o 504,845,o 519,836,m 534,845,o 547,848,o 562,850,o 576,841,n 591,838,g 606,844,g 620,845,b 635,850,o 648,850,o 662,847,b 677,852,o 692,846,n 707,830,n 721,825,n 735,824,g 749,811,g 764,802,g 778,785,g 793,782,g 808,845,o';
let bk='',ft='';
vol.split(' ').forEach(s=>{const [x,y,k]=s.split(',');const w=x==='62'?8:x==='808'?7:13;const r=`<rect x="${x}" y="${y}" width="${w}" height="${857-y}" fill="${col[k]}"/>`;if(k==='g'||k==='n')bk+=r;else ft+=r});
$('bars').innerHTML=bk;$('barsTop').innerHTML=ft;

// vertical text tags
const box=(x,y,w,h,fill,ink,letters,dir)=>{const c=x+w/2;return `<path d="M${c-4} ${dir<0?y:y+h}l4 ${4*dir} 4 ${-4*dir}z" fill="${fill}"/><rect x="${x}" y="${y}" width="${w}" height="${h}" fill="${fill}"/><g class="tag" fill="${ink}" text-anchor="middle">${letters.map((l,i)=>`<text x="${c}" y="${y+12+i*13}">${l}</text>`).join('')}</g>`};
let t='';
[458,487,646,762,776,791].forEach(x=>t+=box(x,401,19,55,'#808000','#111',['D','T','C'],-1));
t+=box(810,401,15,55,'#000080','#fff',['D','S','i'],-1);
[185,201,216].forEach(x=>t+=box(x,524,15,55,'rgba(40,40,40,.75)','#2a2ad8',['S','E','L','L'],1));
t+=box(298,524,23,69,'rgba(255,50,50,.85)','#501010',['S','E','L','L','Nn'],1);
[97,502].forEach(x=>t+=box(x,691,19,56,'rgba(50,95,50,.85)','#111',['B','u','y','N'],-1));
const flag=(x,y,c)=>`<path d="M${x} ${y}h8v6h-5v3h-3z" fill="${c}" fill-opacity=".6"/>`;
[[406,456],[767,456],[796,456],[811,456],[406,842],[767,842],[796,842]].forEach(([x,y])=>t+=flag(x,y,'#208040'));
t+=flag(232,126,'#f33')+flag(232,790,'#f33');
$('tags').innerHTML=t;

// economic events
const eu=(x)=>`<circle cx="${x}" cy="476" r="12" fill="#fff" stroke="#f0a040" stroke-width="1.500"/><circle cx="${x}" cy="476" r="9" fill="#4356a8"/><circle cx="${x}" cy="476" r="5.500" fill="none" stroke="#e8d060" stroke-width="1.500" stroke-dasharray="1.500 2.800"/>`;
const us=(x)=>`<circle cx="${x}" cy="476" r="12" fill="#fff" stroke="#f0a040" stroke-width="1.500"/><path d="M${x-8} 473h16M${x-8} 477h16M${x-7} 481h14" stroke="#e05060" stroke-width="2"/><path d="M${x-8} 470h8v7h-8z" fill="#4a7ac8"/>`;
const num=(x,n)=>`<circle cx="${x}" cy="468" r="6" fill="#fff"/><text x="${x}" y="472" text-anchor="middle" fill="#222" style="font:11px 'Noto Sans',sans-serif">${n}</text>`;
$('events').innerHTML=eu(859)+eu(888)+num(897,2)+us(1177)+us(1162)+num(1172,2)+us(1235)+num(1245,3);
</script>
<script src="https://cdn.jsdelivr.net/npm/bootstrap@5.3.0/dist/js/bootstrap.bundle.min.js"></script>
</body>
</html>
